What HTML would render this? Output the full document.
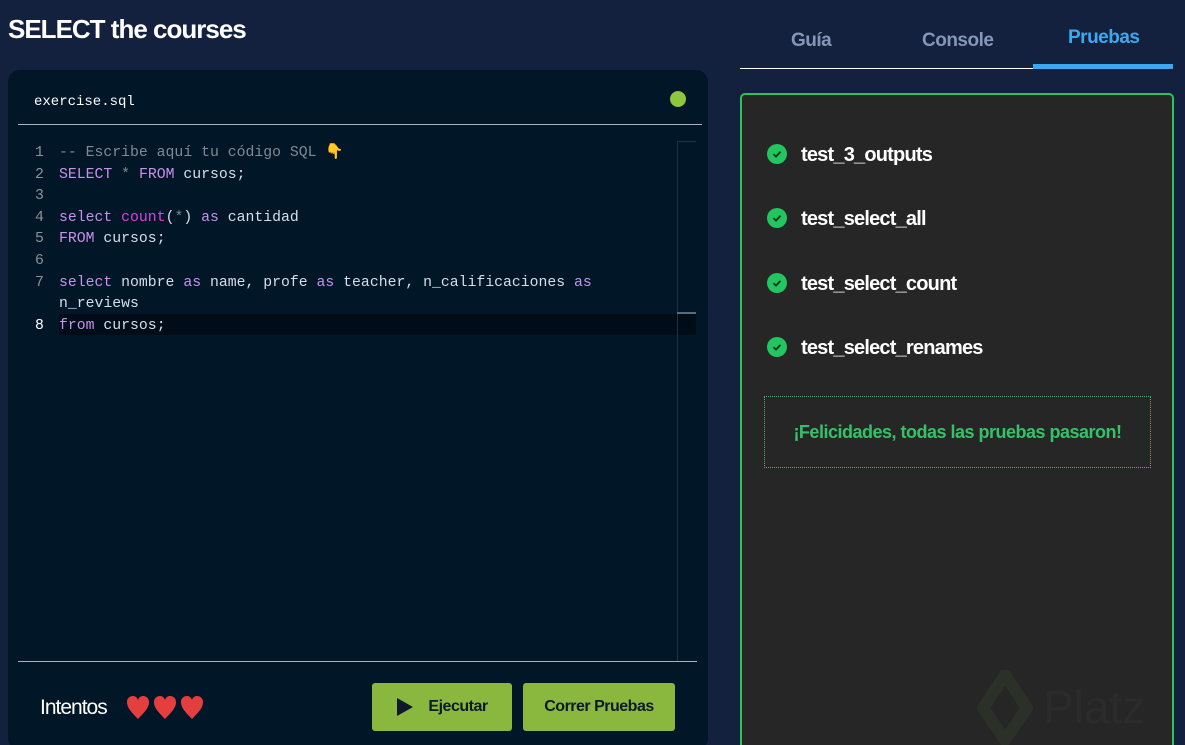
<!DOCTYPE html>
<html><head><meta charset="utf-8"><style>
*{margin:0;padding:0;box-sizing:border-box}
html,body{width:1185px;height:745px;overflow:hidden}
body{background:#13203e;font-family:"Liberation Sans",sans-serif;position:relative}
.abs{position:absolute}
h1{position:absolute;left:8px;top:14px;font-size:26px;font-weight:bold;color:#fff;letter-spacing:-1px}
.card{left:8px;top:70px;width:700px;height:680px;background:#011627;border-radius:12px}
.code{font-family:"Liberation Mono",monospace;font-size:14.8px;line-height:21.6px;white-space:pre;color:#d6deeb}
.k{color:#c792ea}.f{color:#e040e0}.c{color:#7f8a96}.n{color:#8a939c}
.tab{top:30px;font-size:19px;font-weight:bold;color:#8497b6;letter-spacing:-0.5px}
.t{font-size:20px;font-weight:bold;color:#fff;letter-spacing:-0.8px;left:801px}
.chk{left:767px;width:20px;height:20px}
.btn{top:683px;height:48px;background:#8ab83e;border-radius:3px;font-weight:bold;font-size:16px;color:#0e1a2b;letter-spacing:-0.5px;display:flex;align-items:center;justify-content:center}
</style></head><body>
<h1>SELECT the courses</h1>
<div class="abs card"></div>
<div class="abs" style="left:34px;top:94px;font-family:'Liberation Mono',monospace;font-size:14px;color:#fff">exercise.sql</div>
<div class="abs" style="left:670px;top:91px;width:16px;height:16px;border-radius:50%;background:#8dc63f"></div>
<div class="abs" style="left:18px;top:124px;width:684px;height:1px;background:#a9b3bf"></div>
<div class="abs" style="left:59px;top:314px;width:637px;height:21px;background:#000d19"></div>
<div class="abs" style="left:677px;top:141px;width:1px;height:520px;background:#1f3142"></div>
<div class="abs" style="left:677px;top:141px;width:19px;height:1px;background:#1f3142"></div>
<div class="abs" style="left:677px;top:312px;width:19px;height:2px;background:#5a6b7c"></div>
<div class="abs code n" style="left:35px;top:143px">1
2
3
4
5
6
7

<span style="color:#fff">8</span></div>
<div class="abs code" style="left:59px;top:143px"><span class="c">-- Escribe aquí tu código SQL </span><span style="color:#f5b82e">👇</span>
<span class="k">SELECT</span> <span class="c">*</span> <span class="k">FROM</span> cursos;

<span class="k">select</span> <span class="f">count</span>(<span class="c">*</span>) <span class="k">as</span> cantidad
<span class="k">FROM</span> cursos;

<span class="k">select</span> nombre <span class="k">as</span> name, profe <span class="k">as</span> teacher, n_calificaciones <span class="k">as</span>
n_reviews
<span class="k">from</span> cursos;</div>
<div class="abs" style="left:18px;top:661px;width:679px;height:1px;background:#a9b3bf"></div>
<div class="abs" style="left:40px;top:696px;font-size:21px;color:#fff;letter-spacing:-1px">Intentos</div>
<svg class="abs" style="left:126px;top:695px" width="80" height="26"><g fill="#e53e3e"><path id="h" d="M12 24 C4 16 1 12 1 7 C1 3 4 1 7 1 C9 1 11 2 12 5 C13 2 15 1 17 1 C20 1 23 3 23 7 C23 12 20 16 12 24Z"/><use href="#h" x="27"/><use href="#h" x="54"/></g></svg>
<div class="abs btn" style="left:372px;width:140px"><svg width="18" height="20" style="margin-right:14px"><path d="M1 1 L17 10 L1 19 Z" fill="#0e1a2b"/></svg>Ejecutar</div>
<div class="abs btn" style="left:523px;width:152px">Correr Pruebas</div>

<div class="abs tab" style="left:791px">Guía</div>
<div class="abs tab" style="left:922px">Console</div>
<div class="abs tab" style="left:1068px;top:27px;color:#3ba9f0">Pruebas</div>
<div class="abs" style="left:740px;top:68px;width:433px;height:1px;background:#fff"></div>
<div class="abs" style="left:1033px;top:64px;width:140px;height:5px;background:#3ba9f0"></div>
<div class="abs" style="left:740px;top:93px;width:434px;height:670px;background:#262626;border:2px solid #2dc35a;border-radius:5px"></div>
<svg width="0" height="0" style="position:absolute"><defs><g id="ck"><circle cx="10" cy="10" r="10" fill="#22c55e"/><path d="M6.5 10.2 L9 12.6 L13.5 7.8" fill="none" stroke="#10331c" stroke-width="1.8"/></g></defs></svg>
<svg class="abs chk" style="top:144px"><use href="#ck"/></svg><div class="abs t" style="top:144px">test_3_outputs</div>
<svg class="abs chk" style="top:208px"><use href="#ck"/></svg><div class="abs t" style="top:208px">test_select_all</div>
<svg class="abs chk" style="top:273px"><use href="#ck"/></svg><div class="abs t" style="top:273px">test_select_count</div>
<svg class="abs chk" style="top:337px"><use href="#ck"/></svg><div class="abs t" style="top:337px">test_select_renames</div>
<div class="abs" style="left:764px;top:396px;width:387px;height:72px;border:1px dotted #34c268;display:flex;align-items:center;justify-content:center;color:#34c268;font-size:18px;font-weight:bold;letter-spacing:-0.5px">¡Felicidades, todas las pruebas pasaron!</div>
<svg class="abs" style="left:975px;top:670px" width="60" height="75"><path d="M30 5 L52 38 L30 70 L8 38 Z" fill="none" stroke="#2b3129" stroke-width="12" stroke-linejoin="round"/></svg>
<div class="abs" style="left:1043px;top:680px;font-size:46px;color:#2b2b2b">Platz</div>
</body></html>
